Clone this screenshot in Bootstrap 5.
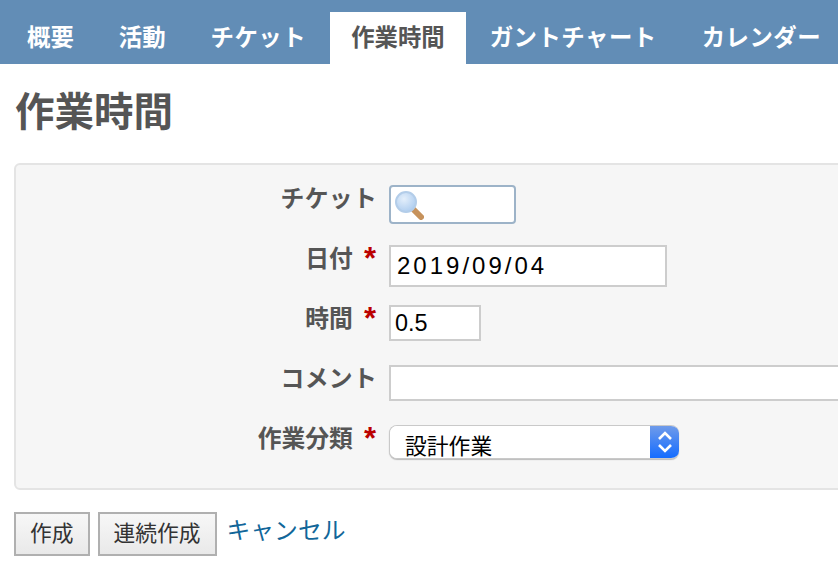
<!DOCTYPE html>
<html lang="ja">
<head>
<meta charset="utf-8">
<title>作業時間</title>
<link href="https://cdn.jsdelivr.net/npm/bootstrap@5.3.0/dist/css/bootstrap.min.css" rel="stylesheet">
<style>
html,body{height:100%;overflow:hidden}
body{font-family:"Liberation Sans","Noto Sans CJK JP",sans-serif;color:#555;background:#fff;width:838px}
.tabbar{background:#628db6;height:64px;padding:12px 0 0 6px;flex-wrap:nowrap;overflow:hidden}
.tabbar .nav-item{margin-right:3px}
.tabbar .nav-link{color:#fff;font-weight:700;font-size:23.4px;line-height:52px;height:52px;padding:0 21px;white-space:nowrap}
.tabbar .nav-link.active{background:#fff;color:#555}
.tabbar .nav-link.kana{letter-spacing:.5px}
.pagetitle{font-size:39.5px;font-weight:700;line-height:48px;color:#555;margin:24px 0 0 15px}
.formbox{margin:27px -40px 0 14px;height:327px;background:#f6f6f6;border:2px solid #e4e4e4;border-radius:6px;padding-top:20px}
.frow{display:flex;align-items:flex-start;height:60px}
.flabel{width:373px;flex:none;text-align:right;padding-right:13px;font-size:23.8px;font-weight:700;line-height:28px;margin:0;color:#555}
.flabel.kana{padding-right:12px;letter-spacing:.3px}
.flabel b{color:#b00;margin-left:11px;font-size:31px;line-height:20px;position:relative;top:2px}
.finput{border:2px solid #cdcdcd;background:#fff;color:#000;border-radius:0;font-family:"Liberation Sans","Noto Sans CJK JP",sans-serif;font-size:23.4px;padding:0 5px;outline:0;display:block}
.fticket{width:127px;height:39px;border:2px solid #9db3c8;border-radius:4px;background:#fff;display:flex;align-items:center;padding-left:3px}
.fdate{width:278px;height:42px;padding-left:6px;font-size:24px;letter-spacing:3px}
.ftime{width:92px;height:36px;padding-left:4px}
.fcomment{width:500px;height:36px}
.selwrap{width:290px;height:34px;display:flex;border-radius:8px;overflow:hidden;background:#fff;border:1px solid #c9c9c9;border-right:0;box-shadow:0 1px 1px #bbb}
.selwrap select{appearance:none;border:0;background:#fff;flex:1;min-width:0;font-size:21.8px;padding:0 0 0 15px;height:40px;line-height:42px;color:#000;font-family:"Liberation Sans","Noto Sans CJK JP",sans-serif;outline:0}
.selarrow{width:29px;background:linear-gradient(#6f9bea,#146cff);display:flex;align-items:center;justify-content:center}
.actions{margin:22px 0 0 14px;gap:8px}
.actbtn{height:44px;border:2px solid #b0b0b0;border-radius:0;background:linear-gradient(#f7f7f7,#e9e9e9);color:#333;font-size:21.75px;line-height:38px;padding:0 14px}
.actbtn:hover{background:#eee;border-color:#b0b0b0}
.cancel{color:#169;font-size:23.8px;text-decoration:none;line-height:36px;margin:1px 0 0 2px}
</style>
</head>
<body>
<ul class="nav tabbar">
<li class="nav-item"><a class="nav-link" href="#">概要</a></li>
<li class="nav-item"><a class="nav-link" href="#">活動</a></li>
<li class="nav-item"><a class="nav-link kana" href="#">チケット</a></li>
<li class="nav-item"><a class="nav-link active" href="#">作業時間</a></li>
<li class="nav-item"><a class="nav-link kana" href="#">ガントチャート</a></li>
<li class="nav-item"><a class="nav-link kana" href="#">カレンダー</a></li>
</ul>
<h2 class="pagetitle">作業時間</h2>
<form>
<div class="formbox">
<div class="frow"><label class="flabel kana">チケット</label>
<div class="fticket"><svg width="30" height="30" viewBox="0 0 30 30"><defs><radialGradient id="gl" cx=".4" cy=".35" r=".75"><stop offset="0" stop-color="#e4effb"/><stop offset="1" stop-color="#a8c9ee"/></radialGradient></defs><line x1="20" y1="20" x2="27" y2="27" stroke="#c6925c" stroke-width="6" stroke-linecap="round"/><circle cx="12" cy="12" r="10" fill="url(#gl)" stroke="#b3cde9" stroke-width="2"/></svg></div></div>
<div class="frow"><label class="flabel">日付<b>*</b></label><input class="finput fdate" value="2019/09/04"></div>
<div class="frow"><label class="flabel">時間<b>*</b></label><input class="finput ftime" value="0.5"></div>
<div class="frow"><label class="flabel kana">コメント</label><input class="finput fcomment"></div>
<div class="frow"><label class="flabel">作業分類<b>*</b></label>
<div class="selwrap"><select><option>設計作業</option></select><span class="selarrow"><svg width="18" height="26" viewBox="0 0 18 26" fill="none" stroke="#fff" stroke-width="2.6"><path d="M3 10 9 4l6 6M3 16l6 6 6-6"/></svg></span></div></div>
</div>
<div class="d-flex align-items-start actions">
<button type="button" class="btn actbtn">作成</button>
<button type="button" class="btn actbtn">連続作成</button>
<a class="cancel" href="#">キャンセル</a>
</div>
</form>
</body>
</html>
